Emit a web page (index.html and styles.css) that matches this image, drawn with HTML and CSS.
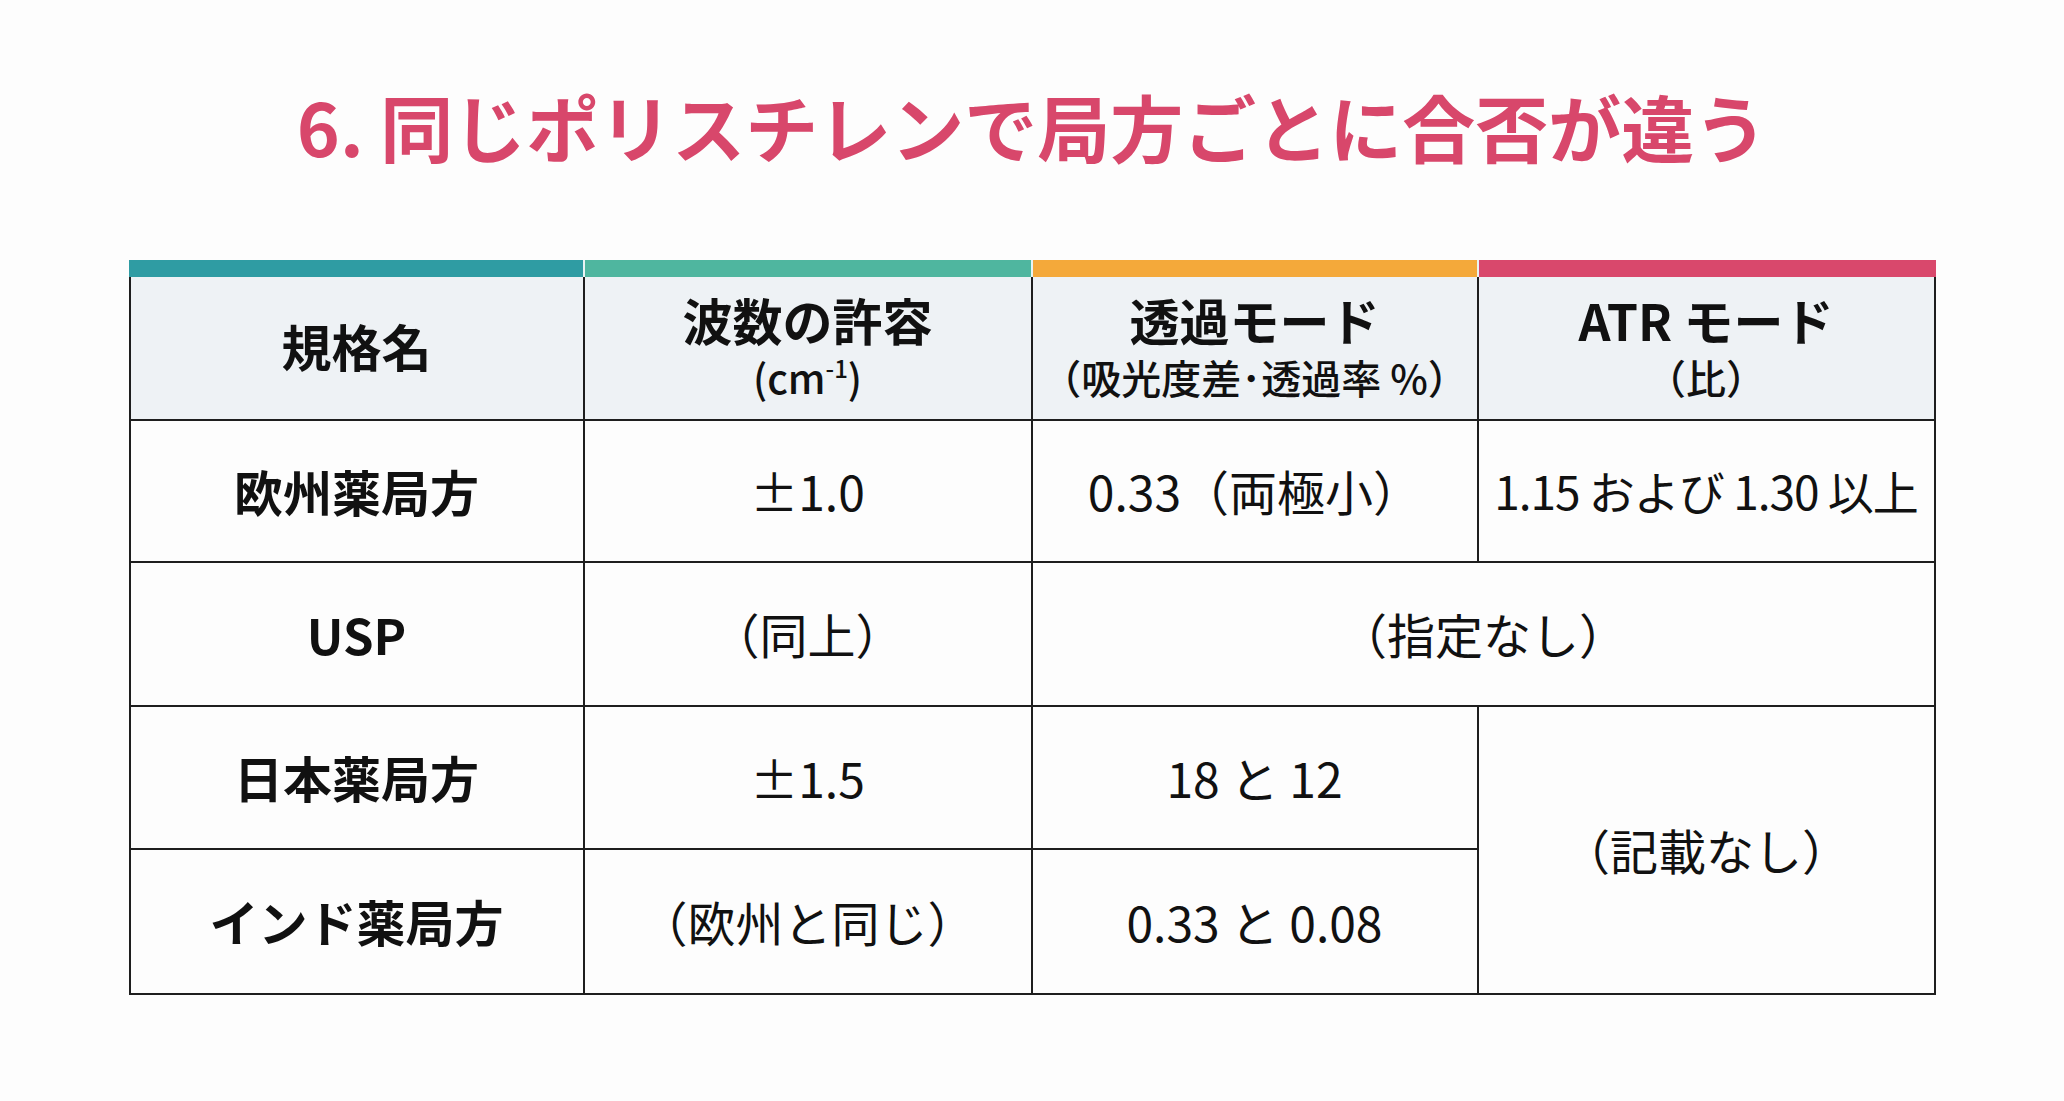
FILE: index.html
```html
<!DOCTYPE html>
<html lang="ja">
<head>
<meta charset="utf-8">
<title>6. 同じポリスチレンで局方ごとに合否が違う</title>
<link rel="stylesheet" href="styles.css">
</head>
<body>
<main class="slide">
  <h1 class="title">6. 同じポリスチレンで局方ごとに合否が違う</h1>
  <section class="table-wrap">
    <div class="bars">
      <div class="bar bar-teal"></div>
      <div class="bar bar-mint"></div>
      <div class="bar bar-orange"></div>
      <div class="bar bar-pink"></div>
    </div>
    <div class="grid">
      <div class="cell head first single"><span class="main">規格名</span></div>
      <div class="cell head"><span class="main">波数の許容</span><span class="sub">(cm<sup>-1</sup>)</span></div>
      <div class="cell head"><span class="main">透過モード</span><span class="sub">（吸光度差･透過率 %）</span></div>
      <div class="cell head"><span class="main">ATR モード</span><span class="sub">（比）</span></div>

      <div class="cell first name">欧州薬局方</div>
      <div class="cell">±1.0</div>
      <div class="cell">0.33（両極小）</div>
      <div class="cell tight">1.15 および 1.30 以上</div>

      <div class="cell first name">USP</div>
      <div class="cell">（同上）</div>
      <div class="cell span-2">（指定なし）</div>

      <div class="cell first name">日本薬局方</div>
      <div class="cell">±1.5</div>
      <div class="cell">18 と 12</div>
      <div class="cell row-span-2">（記載なし）</div>

      <div class="cell first name">インド薬局方</div>
      <div class="cell">（欧州と同じ）</div>
      <div class="cell">0.33 と 0.08</div>
    </div>
  </section>
</main>
</body>
</html>
```
FILE: styles.css
```css
* { box-sizing: border-box; }

html, body {
  margin: 0;
  padding: 0;
  background: #fdfdfd;
}

body {
  font-family: "Noto Sans CJK JP", "Noto Sans", sans-serif;
  color: #111;
  width: 2064px;
  height: 1101px;
  overflow: hidden;
}

.slide {
  display: flex;
  flex-direction: column;
  align-items: center;
}

.title {
  margin: 82px 0 0 0;
  font-size: 73px;
  line-height: 86px;
  font-weight: 700;
  color: #d8476b;
  letter-spacing: 0;
}

.table-wrap {
  margin-top: 92px;
  width: 1807px;
}

.bars {
  display: grid;
  grid-template-columns: 456px 448px 446px 457px;
  height: 17px;
}

.bar { height: 17px; border-right: 2px solid #e8f4f4; }
.bar:last-child { border-right: none; }
.bar-teal { background: #2f9ca3; }
.bar-mint { background: #4fb69f; }
.bar-orange { background: #f4a93a; }
.bar-pink { background: #d9486c; }

.grid {
  display: grid;
  grid-template-columns: 456px 448px 446px 457px;
  grid-template-rows: 144px 142px 144px 143px 145px;
}

.cell {
  display: flex;
  flex-direction: column;
  align-items: center;
  justify-content: center;
  text-align: center;
  border-right: 2px solid #1e1e1e;
  border-bottom: 2px solid #1e1e1e;
  font-size: 48px;
  font-weight: 400;
  line-height: 1.2;
  white-space: nowrap;
}

.cell.first { border-left: 2px solid #1e1e1e; }

.cell.name { font-weight: 700; font-size: 49px; }

.cell.tight { font-size: 46px; letter-spacing: -1px; }

.cell.head {
  background: #eef2f5;
  font-weight: 700;
}

.cell.head.single { padding-bottom: 6px; }

.head .main {
  font-size: 50px;
  line-height: 58px;
  font-weight: 700;
}

.head .sub {
  font-size: 40px;
  line-height: 58px;
  font-weight: 500;
}

.head sup {
  font-size: 24px;
  line-height: 0;
  vertical-align: 16px;
}

.span-2 { grid-column: span 2; }
.row-span-2 { grid-row: span 2; }
```
